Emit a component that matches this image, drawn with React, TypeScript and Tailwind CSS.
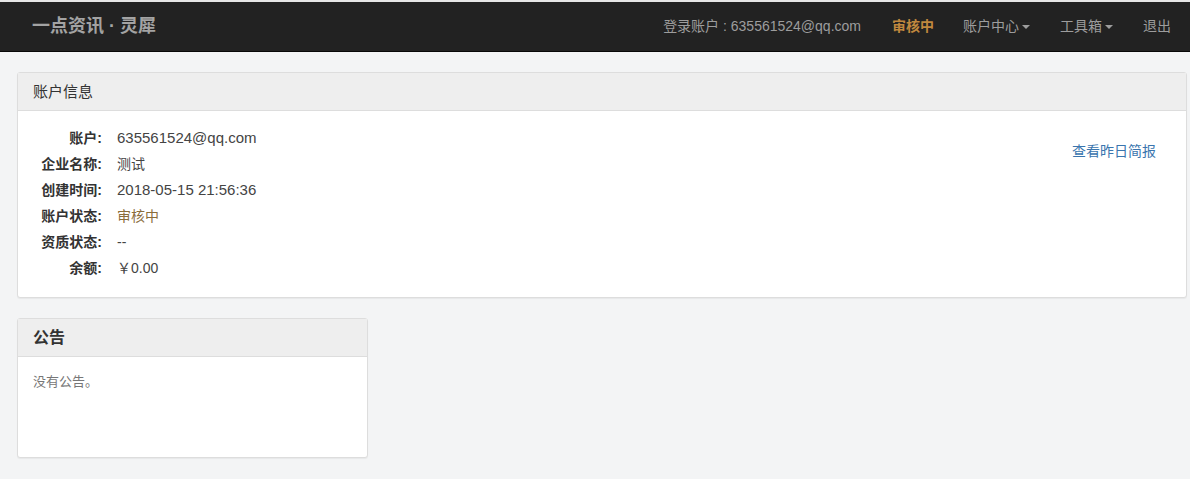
const font = { fontFamily: '"Liberation Sans", "Noto Sans CJK SC", sans-serif' };

const rows: { label: string; value: string; cls: string }[] = [
  { label: '账户:', value: '635561524@qq.com', cls: 'text-[15px] text-[#444]' },
  { label: '企业名称:', value: '测试', cls: 'text-[14px] text-[#444]' },
  { label: '创建时间:', value: '2018-05-15 21:56:36', cls: 'text-[15px] text-[#444]' },
  { label: '账户状态:', value: '审核中', cls: 'text-[14px] text-[#8a6d3b]' },
  { label: '资质状态:', value: '--', cls: 'text-[14px] text-[#444]' },
  { label: '余额:', value: '￥0.00', cls: 'text-[14px] text-[#444]' },
];

function Caret() {
  return <span className="ml-[3px] inline-block w-0 h-0 border-x-[4px] border-x-transparent border-t-[4px] border-t-[#9d9d9d] align-middle" />;
}

export default function App() {
  return (
    <div className="min-h-[479px] bg-[#f3f4f5] text-[#333]" style={font}>
      {/* 顶部导航 */}
      <div className="border-t-2 border-[#e6e6e6]">
        <nav className="h-[50px] bg-[#222] border-b border-[#080808] flex items-center justify-between pl-[32px] pr-[19px]">
          <span className="text-[18px] font-bold text-[#a3a3a3]">一点资讯 · 灵犀</span>
          <div className="flex items-center text-[14px] text-[#9d9d9d]">
            <span>登录账户 : 635561524@qq.com</span>
            <span className="ml-[31px] font-bold text-[#c0883e]">审核中</span>
            <span className="ml-[29px] flex items-center">账户中心<Caret /></span>
            <span className="ml-[30px] flex items-center">工具箱<Caret /></span>
            <span className="ml-[30px]">退出</span>
          </div>
        </nav>
      </div>

      <div className="pl-[17px] pt-[20px] flex flex-col gap-[20px]">
        {/* 账户信息 */}
        <div className="w-[1170px] bg-white border border-[#ddd] rounded-[3px] shadow-[0_1px_1px_rgba(0,0,0,0.05)]">
          <div className="h-[38px] bg-[#eee] border-b border-[#ddd] flex items-center pt-[2px] px-[15px] text-[15px] text-[#333]">
            账户信息
          </div>
          <div className="flex items-start justify-between pt-[14px] pb-[16px] pl-[15px] pr-[30px]">
            <div className="flex flex-col">
              {rows.map((r) => (
                <div key={r.label} className="h-[26px] flex items-center">
                  <span className="w-[69px] text-right text-[14px] font-bold text-[#333]">{r.label}</span>
                  <span className={`ml-[15px] ${r.cls}`}>{r.value}</span>
                </div>
              ))}
            </div>
            <span className="mt-[16px] text-[14px] text-[#3a75ae]">查看昨日简报</span>
          </div>
        </div>

        {/* 公告 */}
        <div className="w-[351px] bg-white border border-[#ddd] rounded-[3px] shadow-[0_1px_1px_rgba(0,0,0,0.05)]">
          <div className="h-[38px] bg-[#eee] border-b border-[#ddd] flex items-center px-[15px] text-[16px] font-bold text-[#333]">
            公告
          </div>
          <div className="h-[100px] px-[15px] pt-[15px] text-[13px] text-[#777]">没有公告。</div>
        </div>
      </div>
    </div>
  );
}
